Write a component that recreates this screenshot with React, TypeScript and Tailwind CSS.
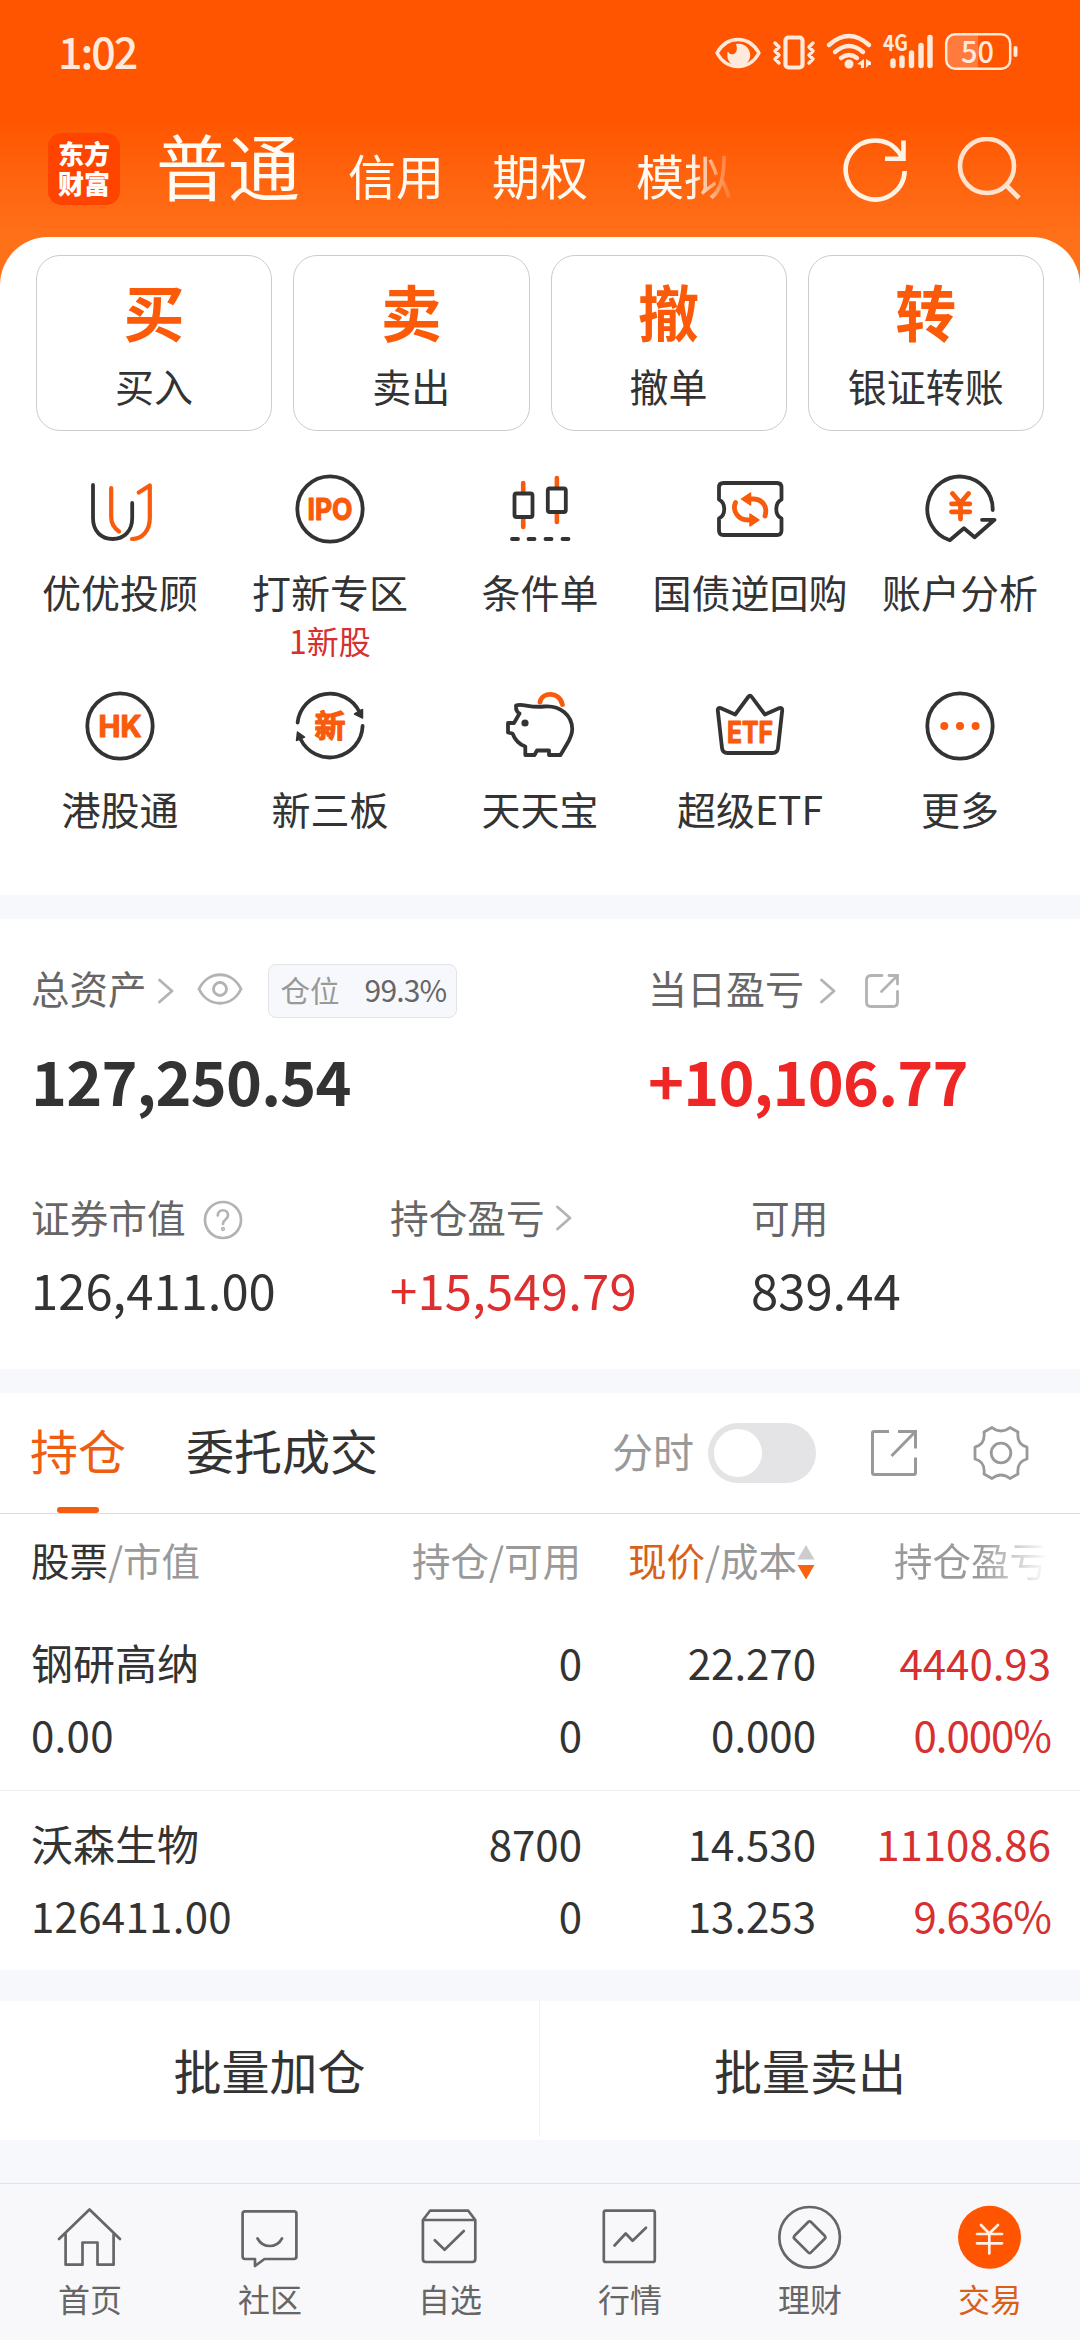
import type { ReactNode } from 'react';

type Feature = { label: string; icon: ReactNode; sub?: string };

type Holding = {
  name: string;
  marketValue: string;
  amount: string;
  available: string;
  price: string;
  cost: string;
  profit: string;
  rate: string;
};

const DARK = '#333333';
const ORANGE = '#f95a0b';

const actions = [
  { glyph: '买', label: '买入' },
  { glyph: '卖', label: '卖出' },
  { glyph: '撤', label: '撤单' },
  { glyph: '转', label: '银证转账' },
];

const holdings: Holding[] = [
  { name: '钢研高纳', marketValue: '0.00', amount: '0', available: '0', price: '22.270', cost: '0.000', profit: '4440.93', rate: '0.000%' },
  { name: '沃森生物', marketValue: '126411.00', amount: '8700', available: '0', price: '14.530', cost: '13.253', profit: '11108.86', rate: '9.636%' },
];

/** 功能宫格图标，统一 72x72 画布 */
function FeatureIcon({ children }: { children: ReactNode }) {
  return (
    <svg width="72" height="72" viewBox="0 0 72 72" fill="none" stroke={DARK} strokeWidth="3.8" strokeLinecap="round" strokeLinejoin="round" className="shrink-0 overflow-visible">
      {children}
    </svg>
  );
}

/** 图标内的文字，描边让笔画更圆 */
function IconText({ children, y, width, size }: { children: string; y: number; width: number; size: number }) {
  return (
    <text x={36 - width / 2} y={y} textLength={width} lengthAdjust="spacingAndGlyphs" fontSize={size} fontWeight="700" fill={ORANGE} stroke={ORANGE} strokeWidth="1.2" className="font-[Inter,'Noto_Sans_CJK_SC',sans-serif]">
      {children}
    </text>
  );
}

const features: Feature[] = [
  {
    label: '优优投顾',
    icon: (
      <FeatureIcon>
        <path d="M9 12V45C9 58 17 66 28.6 66S48.2 58 48.2 45V30" />
        <path stroke={ORANGE} strokeWidth="4.2" d="M27.2 15V44C27.2 51 30 55 35 58.5M54.8 19.5L65.8 12.5V45C65.8 58 58 66 48 66" />
      </FeatureIcon>
    ),
  },
  {
    label: '打新专区',
    sub: '1新股',
    icon: (
      <FeatureIcon>
        <circle cx="36" cy="36" r="32.7" />
        <IconText y={47} width={45} size={30}>IPO</IconText>
      </FeatureIcon>
    ),
  },
  {
    label: '条件单',
    icon: (
      <FeatureIcon>
        <path stroke={ORANGE} strokeWidth="4.6" d="M19.2 10V20M19.2 46V54M52.9 5V14M52.9 41V49" />
        <rect x="10.5" y="20.5" width="18" height="23.5" rx="2" />
        <rect x="43.8" y="15.5" width="18" height="23.5" rx="2" />
        <path d="M8 66H14M24.5 66H30.5M41.5 66H47.5M58.5 66H64.5" />
      </FeatureIcon>
    ),
  },
  {
    label: '国债逆回购',
    icon: (
      <FeatureIcon>
        <path d="M9.5 10H63Q67.5 10 67.5 14.5V26.5C60.5 30 60.5 42 67.5 45.5V57.5Q67.5 62 63 62H9.5Q5 62 5 57.5V45.5C12 42 12 30 5 26.5V14.5Q5 10 9.5 10Z" />
        <path stroke={ORANGE} strokeWidth="4.8" d="M34 26H39C48 26 54 33 51 43M21.5 29.5C18 38 24 47 34 47H38" />
        <path fill={ORANGE} stroke={ORANGE} strokeWidth="1.5" d="M27.5 26L36.5 20V32ZM45 47L36 41V53Z" />
      </FeatureIcon>
    ),
  },
  {
    label: '账户分析',
    icon: (
      <FeatureIcon>
        <path d="M68.7 37A32.7 32.7 0 1 0 25.8 67.3L39.9 55.3L50.6 64.3L70.5 46.8H58" />
        <path stroke={ORANGE} strokeWidth="4.8" d="M28.5 20.5L36.5 30L44.5 20.5M36.5 30V46M27.5 30.8H45.8M27.5 38.8H45.8" />
      </FeatureIcon>
    ),
  },
  {
    label: '港股通',
    icon: (
      <FeatureIcon>
        <circle cx="36" cy="36" r="32.7" />
        <IconText y={47} width={43} size={30}>HK</IconText>
      </FeatureIcon>
    ),
  },
  {
    label: '新三板',
    icon: (
      <FeatureIcon>
        <path d="M3.6 32.5A32.7 32.7 0 0 1 65.5 22M68.6 36A32.7 32.7 0 0 1 6.5 49" />
        <path fill={DARK} strokeWidth="1.5" d="M60.5 24L68.5 19.5V28ZM3.5 42L10.5 47L2.5 50.5Z" />
        <IconText y={47} width={31} size={31}>新</IconText>
      </FeatureIcon>
    ),
  },
  {
    label: '天天宝',
    icon: (
      <FeatureIcon>
        <path stroke={ORANGE} strokeWidth="4.8" d="M36 12C38 2 55 1 58.4 14.5" />
        <path d="M12 15.5C18 13 25 18 40 16.5C56 15 68 25 68.2 39C68.3 45 66 49 63 54L56.5 65H45V60.5H33L30.5 65H21.3V56.5C14 54 11 50 8.5 43.5L4 42.5V33H10L15.5 23.5C12 22 12 19 12 15.5Z" />
        <circle cx="21" cy="33" r="3.6" fill={DARK} stroke="none" />
      </FeatureIcon>
    ),
  },
  {
    label: '超级ETF',
    icon: (
      <FeatureIcon>
        <path d="M3.8 20.5Q3.5 17.5 6.5 18L21.2 24.5L34.2 7Q36 4.5 37.8 7L50.9 24.5L65.5 18Q68.5 17.5 68.2 20.5L64 58Q63.4 63 58.5 63H13.5Q8.6 63 8 58Z" />
        <IconText y={53.3} width={46} size={30}>ETF</IconText>
      </FeatureIcon>
    ),
  },
  {
    label: '更多',
    icon: (
      <FeatureIcon>
        <circle cx="36" cy="36" r="32.7" />
        <g fill={ORANGE} stroke="none">
          <circle cx="20.3" cy="36" r="4" />
          <circle cx="36" cy="36" r="4" />
          <circle cx="51.6" cy="36" r="4" />
        </g>
      </FeatureIcon>
    ),
  },
];

/** 底部导航图标，统一 66x66 画布 */
function NavIcon({ children }: { children: ReactNode }) {
  return (
    <svg width="66" height="66" viewBox="0 0 66 66" fill="none" stroke="#666666" strokeWidth="2.7" strokeLinecap="round" strokeLinejoin="round">
      {children}
    </svg>
  );
}

const navItems = [
  {
    label: '首页',
    icon: (
      <NavIcon>
        <path d="M2 35L32.5 5.5L63 35M8.6 30V60.7H25.5V38.5H40.5V60.7H56.6V30" />
      </NavIcon>
    ),
  },
  {
    label: '社区',
    icon: (
      <NavIcon>
        <path d="M8 7.3H57Q59.4 7.3 59.4 9.7V52.6Q59.4 55 57 55H27.5L18 62V55H8Q5.6 55 5.6 52.6V9.7Q5.6 7.3 8 7.3ZM20.5 34.5C26 44.5 39.5 44.5 45 34.5" />
      </NavIcon>
    ),
  },
  {
    label: '自选',
    icon: (
      <NavIcon>
        <path d="M5.9 16L13 6.7H51.3L58.3 16V55Q58.3 58 55.3 58H8.9Q5.9 58 5.9 55ZM5.9 16H58.3M17.8 36.3L27.6 45.8L46.8 27" />
      </NavIcon>
    ),
  },
  {
    label: '行情',
    icon: (
      <NavIcon>
        <rect x="6.8" y="6.7" width="51" height="51.3" rx="2" />
        <path d="M17.5 41.5L28.7 29.5L35.6 36.7L49 23.8" />
      </NavIcon>
    ),
  },
  {
    label: '理财',
    icon: (
      <NavIcon>
        <circle cx="32.6" cy="33.3" r="30.3" />
        <path d="M31.2 18Q32.6 16.6 34 18L47.7 31.8Q49.1 33.3 47.7 34.8L34 48.4Q32.6 49.8 31.2 48.4L17.5 34.8Q16.1 33.3 17.5 31.8Z" />
      </NavIcon>
    ),
  },
  {
    label: '交易',
    active: true,
    icon: (
      <NavIcon>
        <circle cx="32.5" cy="33.3" r="31.5" fill="#ff5500" stroke="none" />
        <path stroke="#fff1e6" d="M24 21L32.3 29.5L41 21M32.3 29.5V49.5M20 30H45M20 39.3H45" />
      </NavIcon>
    ),
  },
];

function Chevron() {
  return (
    <svg width="16" height="26" viewBox="0 0 16 26" fill="none" stroke="#b3b3b3" strokeWidth="2.8" strokeLinecap="round" strokeLinejoin="round">
      <path d="M1.5 2L14 13L1.5 24" />
    </svg>
  );
}

function StatusBar() {
  return (
    <div className="flex h-[104px] items-center pr-[61px] pl-[58px] text-[#ffe9dc]">
      <span className="flex-1 pb-[5px] text-[43px] leading-[52px] font-medium tracking-[-2px]">1:02</span>
      <svg width="304" height="38" viewBox="715 32 304 38" fill="none" stroke="currentColor" strokeWidth="3.4" strokeLinecap="round" strokeLinejoin="round" className="overflow-visible">
        {/* 护眼 */}
        <path d="M717 52C727 34 749 34 759 52C749 70 727 70 717 52Z" />
        <path fill="currentColor" stroke="none" d="M736 43A11.500 11.500 0 1 1 728 50C729 56 740 54 736 43Z" />
        {/* 振动 */}
        <rect x="785.500" y="36.500" width="17" height="30" rx="3" strokeWidth="4.200" />
        <path strokeWidth="3.4" d="M775 42L779 46L775 50L779 54L775 58L779 62M813 42L809 46L813 50L809 54L813 58L809 62" />
        {/* WiFi */}
        <path strokeWidth="4.4" d="M829 44Q849 26 869 44M835 51Q849 39 863 51M841 57Q849 51 857 57" />
        <circle cx="849" cy="63" r="4.500" fill="currentColor" stroke="none" />
        <path fill="currentColor" stroke="none" d="M864 58V67H861V64L857 63ZM866 58L871 61V64L869 64L866 67Z" />
        {/* 信号 */}
        <path strokeWidth="5.4" d="M893 60V64.500M902 57V64.500M911.500 52V64.500M921 44.500V64.500M930 36.500V64.500" />
        <text x="883" y="50" fontSize="22" fontWeight="700" fill="currentColor" stroke="none" textLength="25" lengthAdjust="spacingAndGlyphs">4G</text>
        {/* 电量 */}
        <path fill="#ff7a3d" stroke="none" d="M955 34H978V68H955Q947 68 947 60V42Q947 34 955 34Z" />
        <rect x="946.200" y="33.300" width="64" height="34.500" rx="9" strokeWidth="2.500" />
        <path strokeWidth="4" d="M1015.500 47V54" />
        <text x="961" y="61.500" fontSize="31" fontWeight="500" fill="currentColor" stroke="none" textLength="33" lengthAdjust="spacingAndGlyphs">50</text>
      </svg>
    </div>
  );
}

function TopTabs() {
  return (
    <div className="flex h-[133px] items-start pl-12 text-white">
      <div className="mt-[29px] flex h-[72px] w-[72px] flex-col items-center justify-center rounded-[14px] bg-[#ff4400] pb-[3px] text-[26px] leading-[30px] font-black">
        <span>东方</span>
        <span>财富</span>
      </div>
      <div className="ml-9 flex w-[576px] items-baseline gap-12 mask-r-from-[534px] mask-r-to-[580px] pt-5 text-[48px] leading-[80px] text-[#fffaf2]">
        <span className="text-[72px]">普通</span>
        <span className="pt-[2px]">信用</span>
        <span>期权</span>
        <span>模拟</span>
      </div>
      <svg width="66" height="66" viewBox="843 137 66 66" fill="none" stroke="#fff3e6" strokeWidth="4.6" className="mt-[33px] ml-[111px]">
        <path d="M904.700 171A29.500 29.500 0 1 1 899 152.500L904 160M885 158.800H903.500V140.500" />
      </svg>
      <svg width="66" height="66" viewBox="956 137 66 66" fill="none" stroke="#ffe3cf" strokeWidth="4.600" className="mt-[33px] ml-[47px]">
        <path d="M1005 184L1019 198" />
        <circle cx="987" cy="166" r="27" />
      </svg>
    </div>
  );
}

function AssetSummary() {
  return (
    <section className="h-[450px] bg-white pt-[45px] text-[39px] text-[#666666]">
      <div className="flex pl-[31px]">
        <div className="w-[617px]">
          <div className="flex h-[53px] items-center">
            <span className="pb-[7px] text-[38.5px] leading-10">总资产</span>
            <span className="ml-[11px]"><Chevron /></span>
            <svg width="46" height="32" viewBox="0 0 46 32" fill="none" stroke="#b3b3b3" strokeWidth="2.800" className="mb-1 ml-[23px]">
              <path d="M2 16C11 -3 35 -3 44 16C35 35 11 35 2 16Z" strokeLinejoin="round" />
              <circle cx="23" cy="16" r="6.500" />
            </svg>
            <div className="ml-[25px] flex h-[54px] w-[189px] items-center rounded-lg border border-[#e3e4e8] bg-[#f7f8fb] pb-[3px] pl-3 text-[29.5px]">
              <span className="text-[#999999]">仓位</span>
              <span className="ml-[25px] text-[30px] tracking-[-0.8px]">99.3%</span>
            </div>
          </div>
          <p className="mt-[31px] text-[61px] leading-[64px] font-bold tracking-[-0.8px] text-[#333333]">127,250.54</p>
        </div>
        <div>
          <div className="flex h-[53px] items-center">
            <span className="pb-[7px] text-[39px] leading-10">当日盈亏</span>
            <span className="ml-4"><Chevron /></span>
            <svg width="36" height="36" viewBox="0 0 36 36" fill="none" stroke="#b3b3b3" strokeWidth="2.800" strokeLinecap="round" className="ml-[28px]">
              <path d="M18 2.500H7Q2.500 2.500 2.500 7V29Q2.500 33.500 7 33.500H29Q33.500 33.500 33.500 29V18.500M25 2.500H33.500V11M33 3L17.500 18.500" />
            </svg>
          </div>
          <p className="mt-[31px] text-[61px] leading-[64px] font-bold tracking-[-0.8px] text-[#ee2626]">+10,106.77</p>
        </div>
      </div>
      <div className="mt-[84px] flex pl-[31px] text-[38.7px] leading-10">
        <div className="w-[359px]">
          <div className="flex items-center">
            证券市值
            <svg width="40" height="40" viewBox="0 0 40 40" fill="none" stroke="#b3b3b3" strokeWidth="2.700" strokeLinecap="round" className="mt-1 -mb-1 ml-[17px]">
              <circle cx="20" cy="20" r="18" />
              <path d="M14.800 15.500C15 8.500 25 8.500 25 15.500C25 19.500 20 19 20 24" />
              <circle cx="20" cy="29" r="0.800" />
            </svg>
          </div>
          <p className="mt-[28px] text-[49px] leading-[50px] text-[#333333]">126,411.00</p>
        </div>
        <div className="w-[361px]">
          <div className="flex items-center">
            持仓盈亏
            <span className="mt-1 ml-[11px]"><Chevron /></span>
          </div>
          <p className="mt-[28px] text-[49px] leading-[50px] tracking-[0.2px] text-[#dd2f2f]">+15,549.79</p>
        </div>
        <div>
          可用
          <p className="mt-[28px] text-[49px] leading-[50px] text-[#333333]">839.44</p>
        </div>
      </div>
    </section>
  );
}

function HoldingTabs() {
  return (
    <div className="flex h-[121px] items-center border-b border-[#dddddd] pl-[30px] text-[48px] text-[#333333]">
      <div className="flex h-[120px] flex-col items-center justify-between pt-6 text-[#ee5d12]">
        <span className="leading-[64px]">持仓</span>
        <span className="h-[6px] w-[42px] rounded-full bg-[#f55c10]" />
      </div>
      <span className="ml-[60px] pb-2 leading-[64px]">委托成交</span>
      <span className="ml-[234px] pb-[6px] text-[41px] leading-[48px] text-[#999999]">分时</span>
      <div className="ml-[14px] h-[60px] w-[108px] rounded-full bg-[#e4e4e7] p-[6px]">
        <div className="h-12 w-12 rounded-full bg-white" />
      </div>
      <svg width="48" height="48" viewBox="0 0 48 48" fill="none" stroke="#999999" strokeWidth="3" className="ml-[54px]">
        <path d="M19 2.500H4Q2.500 2.500 2.500 4V43.500Q2.500 45.500 4.500 45.500H44Q45.500 45.500 45.500 43.500V28.500M28 2.500H45.500V19.500M45 3L21.500 27" />
      </svg>
      <svg width="56" height="56" viewBox="-28 -28 56 56" fill="none" stroke="#999999" strokeWidth="2.800" strokeLinejoin="round" className="ml-[55px]">
        <path d="M-9 -25.500Q0 -18.500 9 -25.500L17 -21Q15.500 -8.500 26 -6V6Q15.500 8.500 17 21L9 25.500Q0 18.500 -9 25.500L-17 21Q-15.500 8.500 -26 6V-6Q-15.500 -8.500 -17 -21Z" />
        <circle r="9.800" />
      </svg>
    </div>
  );
}

function HoldingTable() {
  return (
    <div>
      <div className="flex h-24 items-center pb-1 pl-[31px] text-[38.5px] text-[#999999]">
        <span className="w-[381px]"><span className="text-[#333333]">股票</span>/市值</span>
        <span className="w-[216px]">持仓/可用</span>
        <span><span className="text-[#d9601a]">现价</span>/成本</span>
        <svg width="18" height="36" viewBox="0 0 18 36" className="mt-1">
          <path fill="#cccccc" d="M9 1L17.500 15.500H0.500Z" />
          <path fill="#f9620f" d="M9 35.500L17.500 21H0.500Z" />
        </svg>
        <span className="ml-[79px] bg-linear-to-r from-[#999999] from-55% to-[#ffffff] bg-clip-text text-transparent">持仓盈亏</span>
      </div>
      {holdings.map((h) => (
        <div key={h.name} className="grid grid-cols-[280px_271px_234px_235px] border-b border-[#eeeeee] pt-4 pb-5 pl-[31px] text-right text-[42px] leading-[72px] text-[#333333] last:border-0">
          <span className="text-left">{h.name}</span>
          <span>{h.amount}</span>
          <span>{h.price}</span>
          <span className="text-[#d63030]">{h.profit}</span>
          <span className="text-left tracking-[0.3px]">{h.marketValue}</span>
          <span>{h.available}</span>
          <span>{h.cost}</span>
          <span className="tracking-[-1px] text-[#d63030]">{h.rate}</span>
        </div>
      ))}
    </div>
  );
}

export default function App() {
  return (
    <div className="flex h-[2340px] w-[1080px] flex-col overflow-hidden bg-[#f7f8fb] font-['Noto_Sans_CJK_SC',sans-serif] whitespace-nowrap">
      <header className="h-[285px] shrink-0 bg-linear-to-b from-[#ff5500] from-[118px] to-[#ff7119] to-[240px]">
        <StatusBar />
        <TopTabs />
      </header>

      <section className="-mt-12 h-[658px] shrink-0 rounded-t-[48px] bg-white pt-[18px]">
        <div className="grid grid-cols-4 gap-[21px] px-9">
          {actions.map((a) => (
            <div key={a.label} className="flex h-[176px] flex-col items-center rounded-3xl border border-[#cccccc] pt-[25px]">
              <span className="text-[61px] leading-[60px] font-bold text-[#fb5a09]">{a.glyph}</span>
              <span className="mt-6 text-[39px] leading-10 text-[#333333]">{a.label}</span>
            </div>
          ))}
        </div>
        <div className="mt-[42px] grid grid-cols-5 px-[15px]">
          {features.map((f) => (
            <div key={f.label} className="flex h-[217px] flex-col items-center text-[#333333]">
              {f.icon}
              <span className="mt-[26px] text-[39px] leading-10">{f.label}</span>
              {f.sub && <span className="mt-[13px] text-[32px] leading-8 text-[#d63030]">{f.sub}</span>}
            </div>
          ))}
        </div>
      </section>

      <div className="mt-6 shrink-0">
        <AssetSummary />
      </div>

      <section className="mt-6 h-[577px] shrink-0 bg-white">
        <HoldingTabs />
        <HoldingTable />
      </section>

      <div className="mt-[31px] grid h-[139px] shrink-0 grid-cols-2 bg-white pb-[3px] text-center text-[48px] leading-[136px] text-[#333333]">
        <span className="border-r border-[#f3f3f5]">批量加仓</span>
        <span>批量卖出</span>
      </div>

      <nav className="mt-[43px] grid flex-1 grid-cols-6 border-t border-[#e2e3e6] bg-[#f8f8fb] pt-5 text-[32px] text-[#666666]">
        {navItems.map((n) => (
          <div key={n.label} className="flex flex-col items-center">
            {n.icon}
            <span className={n.active ? 'mt-3 leading-8 text-[#d9601a]' : 'mt-3 leading-8'}>{n.label}</span>
          </div>
        ))}
      </nav>
    </div>
  );
}
